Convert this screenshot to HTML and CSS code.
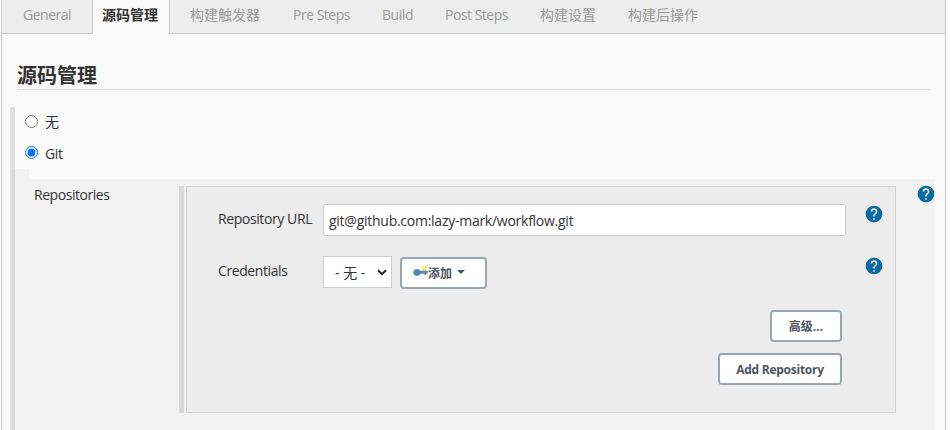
FILE: index.html
```html
<!DOCTYPE html>
<html lang="zh-CN">
<head>
<meta charset="utf-8">
<title>源码管理</title>
<link rel="stylesheet" href="styles.css">
</head>
<body>
<svg class="defs" width="0" height="0" aria-hidden="true">
  <symbol id="help" viewBox="0 0 24 24"><path d="M12 2a10 10 0 1 0 0 20 10 10 0 0 0 0-20zm1 17h-2v-2h2v2zm2.070-7.750-.9.920C13.450 12.900 13 13.500 13 15h-2v-.5c0-1.100.450-2.100 1.170-2.830l1.240-1.260c.370-.360.590-.860.590-1.410a2 2 0 1 0-4 0H8a4 4 0 1 1 8 0c0 .880-.360 1.680-.930 2.250z"/></symbol>
</svg>
<div class="frame">
  <nav class="tabs">
    <a class="tab general">General</a>
    <a class="tab active">源码管理</a>
    <a class="tab trigger">构建触发器</a>
    <a class="tab pre">Pre Steps</a>
    <a class="tab build">Build</a>
    <a class="tab post">Post Steps</a>
    <a class="tab settings">构建设置</a>
    <a class="tab">构建后操作</a>
  </nav>
  <h1 class="title">源码管理</h1>
  <section class="scm">
    <label class="choice"><input type="radio" name="scm"><span>无</span></label>
    <label class="choice git"><input type="radio" name="scm" checked><span>Git</span></label>
    <div class="nested">
      <div class="nested-top"></div>
      <div class="nested-body">
        <div class="repo-label"><span class="repositories">Repositories</span></div>
        <div class="repo-wrap">
          <div class="panel">
            <div class="row">
              <span class="label"><span class="url-label">Repository URL</span></span>
              <input class="url" type="text" value="git@github.com:lazy-mark/workflow.git">
              <svg class="help"><use href="#help"/></svg>
            </div>
            <div class="row second">
              <span class="label"><span class="cred-label">Credentials</span></span>
              <div class="select"><span>- 无 -</span><svg width="10" height="7" viewBox="0 0 10 7"><path d="M1 1.200 5 5.200 9 1.200" fill="none" stroke="#222" stroke-width="2"/></svg></div>
              <button class="btn add">
                <svg class="key" width="15" height="14" viewBox="0 0 15 14">
                  <ellipse cx="7" cy="12.700" rx="5.500" ry=".6" fill="#e6e6e6"/>
                  <circle cx="11.500" cy="2.500" r="1.700" fill="#fff" stroke="#f5eb45" stroke-width="1.600"/>
                  <path d="M6 5h8.500v2.500H13v.9h-1.500v-.9H6z" fill="#5d8dbd" stroke="#477cae" stroke-width=".5"/>
                  <ellipse cx="4" cy="6.500" rx="3.500" ry="3.200" fill="#4d83b7" stroke="#6f9bc5" stroke-width=".6"/>
                </svg><span class="add-text">添加</span><i class="caret"></i>
              </button>
              <svg class="help"><use href="#help"/></svg>
            </div>
            <div class="actions">
              <button class="btn advanced"><span>高级...</span></button>
              <button class="btn add-repo"><span>Add Repository</span></button>
            </div>
          </div>
        </div>
        <svg class="help outer"><use href="#help"/></svg>
      </div>
    </div>
  </section>
</div>
</body>
</html>
```
FILE: styles.css
```css
* { box-sizing: border-box; }
body {
  margin: 0;
  height: 430px;
  overflow: hidden;
  background: #fff;
  color: #333;
  font: 14px/20px "Open Sans", "Noto Sans CJK SC", sans-serif;
}
.defs { display: block; }
.frame {
  width: 945px;
  height: 430px;
  margin-left: 1px;
  border: solid #c9c9c9;
  border-width: 0 1px;
  background: #f9f9f9;
  overflow: hidden;
}
.tabs {
  display: flex;
  height: 34px;
  background: #ededed;
  border-bottom: 1px solid #c9c9c9;
}
.tab { padding-top: 5px; color: #999; white-space: nowrap; }
.general { width: 90px; padding-left: 21px; letter-spacing: -.5px; }
.active {
  width: 78px;
  height: 34px;
  padding-left: 9px;
  background: #f9f9f9;
  border: solid #c9c9c9;
  border-width: 0 1px;
  color: #333;
  font-weight: 700;
}
.trigger { width: 123px; padding-left: 20px; }
.pre { width: 89px; letter-spacing: -.5px; }
.build { width: 63px; letter-spacing: -.45px; }
.post { width: 95px; letter-spacing: -.5px; }
.settings { width: 88px; }
.title {
  margin: 26px 15px 0;
  height: 30px;
  padding-top: 1px;
  border-bottom: 1px solid #dedede;
  font-size: 20px;
  line-height: 30px;
  font-weight: 700;
}
.scm { margin: 17px 10px 0 8px; height: 323px; border-left: 5px solid #e0e0e0; }
.choice { display: flex; height: 31px; padding: 5px 0 0 10px; }
.choice input { width: 13px; height: 13px; margin: 3px 7px 0 0; }
.git { padding-top: 6px; }
.git span { letter-spacing: -.4px; }
.git input { margin-top: 2px; }
.nested { margin-left: -3px; height: 261px; border-left: 3px solid #d8d8d8; }
.nested-top { width: 14px; height: 10px; background: #f2f2f2; }
.nested-body { display: flex; height: 251px; padding-top: 7px; background: #f2f2f2; }
.repo-label { flex: none; width: 164px; padding-left: 19px; margin-top: -1px; }
.repositories { letter-spacing: -.45px; }
.repo-wrap { flex: none; width: 717px; height: 227px; padding-left: 2px; border-left: 5px solid #d8d8d8; }
.panel { height: 227px; padding: 17px 11px 0 31px; border: 1px solid #d3d3d3; background: #ececec; }
.row { display: flex; height: 32px; }
.second { margin-top: 20px; }
.label { width: 105px; padding-top: 5px; white-space: nowrap; }
.url-label, .cred-label { letter-spacing: -.4px; }
.url {
  width: 523px;
  height: 32px;
  padding: 0 5px;
  border: 1px solid #ccc;
  border-radius: 3px;
  color: #333;
  font: inherit;
  letter-spacing: -.26px;
}
.help { flex: none; width: 20px; height: 20px; fill: #0b6aa2; }
.row .help { margin-left: auto; }
.help.outer { margin: -2px 0 0 20px; }
.select {
  display: flex;
  width: 69px;
  height: 32px;
  padding: 0 4px 0 11px;
  align-items: center;
  justify-content: space-between;
  border: 1px solid #ccc;
  background: #fff;
}
.select span { padding-top: 2px; }
.btn {
  height: 32px;
  padding: 0;
  border: 2px solid #9aa7b0;
  border-radius: 4px;
  background: #fff;
  color: #4d545d;
  font: 700 12px/18px "Open Sans", "Noto Sans CJK SC", sans-serif;
}
.add { display: flex; width: 87px; margin: 1px 0 0 8px; padding-left: 11px; align-items: center; }
.key { flex: none; }
.add-text { padding-top: 2px; }
.caret { margin: -2px 0 0 5px; border: 4px solid transparent; border-top-color: #4d545d; border-bottom: 0; }
.actions { display: flex; flex-direction: column; align-items: flex-end; gap: 11px; margin: 22px 42px 0 0; }
.advanced { width: 72px; }
.advanced span { display: block; padding-top: 2px; }
.add-repo { width: 124px; letter-spacing: -.25px; }
.add-repo span { display: block; padding-top: 1px; }
```
